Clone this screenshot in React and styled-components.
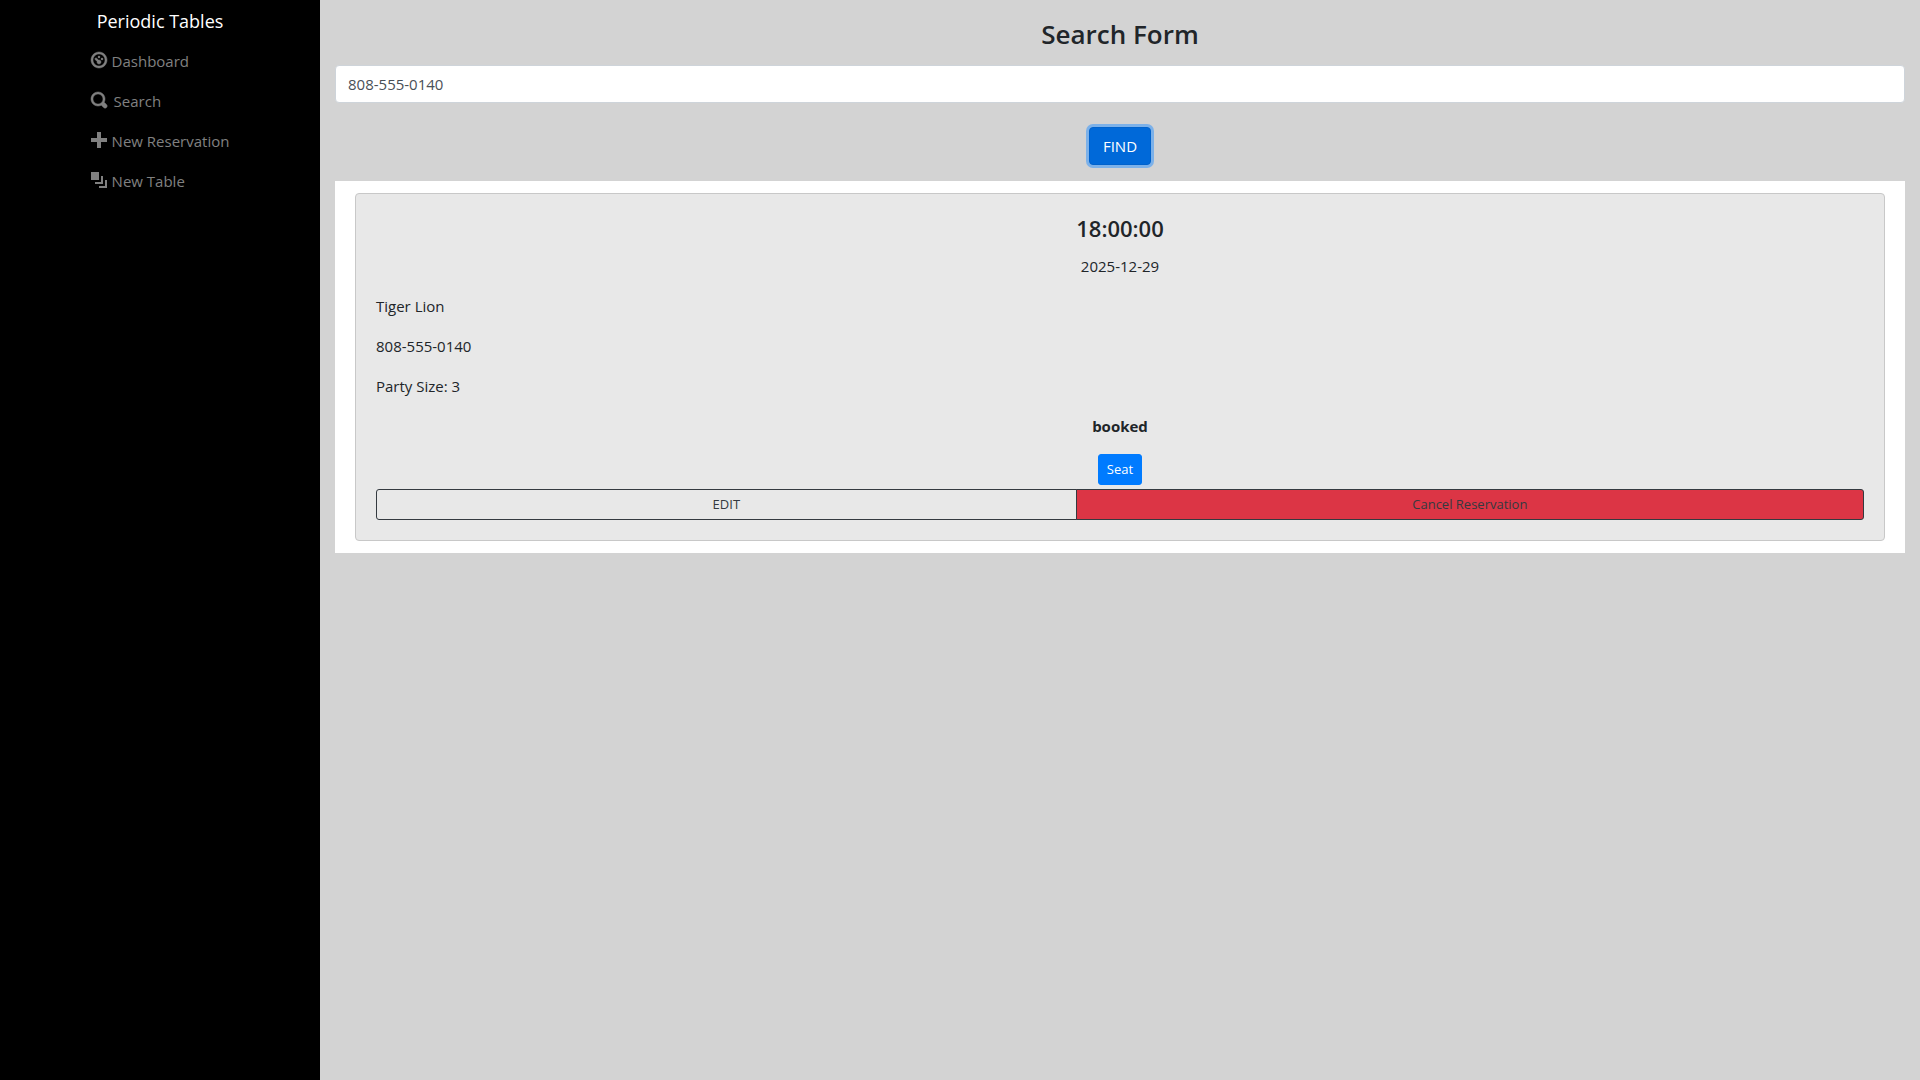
import React, { useState } from "react";
import styled, { createGlobalStyle } from "styled-components";

const GlobalStyle = createGlobalStyle`
  *, *::before, *::after { box-sizing: border-box; }
  body {
    margin: 0;
    background: #d3d3d3;
    color: #212529;
    font-family: "Segoe UI", "Open Sans", "Noto Sans", sans-serif;
    font-size: 15px;
    line-height: 24px;
  }
  h1, h2, p, ul { margin: 0; padding: 0; }
  button, input { font-family: inherit; }
`;

const Layout = styled.div`
  display: grid;
  grid-template-columns: 1fr 5fr;
  min-height: 100vh;
`;

const Sidebar = styled.nav`
  display: flex;
  flex-direction: column;
  align-items: center;
  background: #000;
`;

const Brand = styled.a`
  padding: 6px 0 5px;
  color: #fff;
  font-size: 18px;
  font-weight: 500;
  line-height: 30px;
  text-decoration: none;
`;

const NavList = styled.ul`
  list-style: none;
`;

const NavLink = styled.a`
  display: flex;
  align-items: center;
  gap: ${(p) => (p.$wide ? 7 : 5)}px;
  padding: 8px 0;
  color: #808080;
  text-decoration: none;
`;

const Icon = styled.svg`
  width: 16px;
  height: 16px;
  margin-bottom: 2px;
  overflow: visible;
  fill: currentColor;
  stroke: currentColor;
  stroke-width: ${(p) => (p.$heavy ? 0.25 : 0)};
`;

const Main = styled.main`
  padding: 16px 15px;
`;

const Heading = styled.h1`
  padding-bottom: 13px;
  font-size: 26px;
  font-weight: 600;
  line-height: 36px;
  text-align: center;
`;

const SearchForm = styled.form`
  display: flex;
  flex-direction: column;
  align-items: center;
  gap: 24px;
  padding-bottom: 16px;
`;

const SearchInput = styled.input`
  width: 100%;
  height: 38px;
  padding: 6px 12px;
  border: 1px solid #ced4da;
  border-radius: 4px;
  background: #fff;
  color: #495057;
  font-size: 15px;
  line-height: 24px;
`;

const Button = styled.button`
  padding: 6px 12px;
  border: 1px solid #007bff;
  border-radius: 4px;
  background: #007bff;
  color: #fff;
  font-size: 15px;
  line-height: 24px;
  cursor: pointer;
`;

const FindButton = styled(Button)`
  padding: 6px 13px;
  border-color: #0062cc;
  background: #0069d9;
  box-shadow: 0 0 0 3px rgba(38, 143, 255, 0.5);
`;

const SeatButton = styled(Button)`
  align-self: center;
  padding: 4px 8px;
  border-radius: 3px;
  font-size: 13px;
  line-height: 21px;
`;

const Results = styled.section`
  padding: 12px 20px;
  background: #fff;
`;

const Card = styled.article`
  display: flex;
  flex-direction: column;
  padding: 20px;
  border: 1px solid #c8c8c8;
  border-radius: 4px;
  background: #e8e8e8;
`;

const CardTitle = styled.h2`
  padding-bottom: 12px;
  font-size: 22px;
  font-weight: 600;
  line-height: 28px;
  text-align: center;
`;

const CardText = styled.p`
  padding-bottom: 16px;
  font-weight: ${(p) => (p.$bold ? 700 : 400)};
  text-align: ${(p) => (p.$center ? "center" : "left")};
`;

const ButtonGroup = styled.div`
  display: flex;
  padding-top: 4px;
`;

const GroupButton = styled.button`
  flex: 1 1 auto;
  padding: 4px 8px;
  border: 1px solid #343a40;
  border-radius: 3px 0 0 3px;
  background: ${(p) => (p.$danger ? "#dc3545" : "transparent")};
  color: #343a40;
  font-size: 13px;
  line-height: 21px;
  cursor: pointer;

  & + & {
    margin-left: -1px;
    border-radius: 0 3px 3px 0;
  }
`;

const links = [
  {
    label: "Dashboard",
    heavy: true,
    path: "M4 0c-2.2 0-4 1.8-4 4s1.8 4 4 4 4-1.8 4-4-1.8-4-4-4zm0 1c1.66 0 3 1.34 3 3s-1.34 3-3 3-3-1.34-3-3 1.34-3 3-3zm0 1c-.28 0-.5.22-.5.5s.22.5.5.5.5-.22.5-.5-.22-.5-.5-.5zm-1.66 1a.5.5 0 0 0-.19.84l.91.91c-.02.08-.06.16-.06.25 0 .55.45 1 1 1s1-.45 1-1-.45-1-1-1c-.09 0-.17.04-.25.06l-.91-.91a.5.5 0 0 0-.44-.16.5.5 0 0 0-.06 0zm3.16 0c-.28 0-.5.22-.5.5s.22.5.5.5.5-.22.5-.5-.22-.5-.5-.5z",
  },
  {
    label: "Search",
    wide: true,
    heavy: true,
    path: "M3.5 0c-1.93 0-3.5 1.57-3.5 3.5s1.57 3.5 3.5 3.5c.59 0 1.17-.14 1.66-.41a1 1 0 0 0 .13.13l1 1a1.02 1.02 0 1 0 1.44-1.44l-1-1a1 1 0 0 0-.16-.13c.27-.49.44-1.06.44-1.66 0-1.93-1.55-3.5-3.5-3.5zm0 1c1.39 0 2.5 1.11 2.5 2.5 0 .66-.24 1.27-.66 1.72-.01.01-.02.02-.03.03a1 1 0 0 0-.13.13c-.44.4-1.04.63-1.69.63-1.39 0-2.5-1.11-2.5-2.5s1.11-2.5 2.5-2.5z",
  },
  { label: "New Reservation", path: "M3 0v3h-3v2h3v3h2v-3h3v-2h-3v-3h-2z" },
  {
    label: "New Table",
    path: "M0 0v4h4v-4h-4zm5 2v3h-3v1h4v-4h-1zm2 2v3h-3v1h4v-4h-1z",
  },
];

export default function App() {
  const [phone, setPhone] = useState("808-555-0140");

  return (
    <>
      <GlobalStyle />
      <Layout>
        <Sidebar>
          <Brand href="#">Periodic Tables</Brand>
          <NavList>
            {links.map((link) => (
              <li key={link.label}>
                <NavLink href="#" $wide={link.wide}>
                  <Icon viewBox="0 0 8 8" aria-hidden="true" $heavy={link.heavy}>
                    <path d={link.path} />
                  </Icon>
                  {link.label}
                </NavLink>
              </li>
            ))}
          </NavList>
        </Sidebar>
        <Main>
          <Heading id="search-title">Search Form</Heading>
          <SearchForm onSubmit={(e) => e.preventDefault()}>
            <SearchInput
              type="text"
              aria-labelledby="search-title"
              value={phone}
              onChange={(e) => setPhone(e.target.value)}
            />
            <FindButton type="submit">FIND</FindButton>
          </SearchForm>
          <Results>
            <Card>
              <CardTitle>18:00:00</CardTitle>
              <CardText $center>2025-12-29</CardText>
              <CardText>Tiger Lion</CardText>
              <CardText>808-555-0140</CardText>
              <CardText>Party Size: 3</CardText>
              <CardText $center $bold>
                booked
              </CardText>
              <SeatButton type="button">Seat</SeatButton>
              <ButtonGroup>
                <GroupButton type="button">EDIT</GroupButton>
                <GroupButton type="button" $danger>
                  Cancel Reservation
                </GroupButton>
              </ButtonGroup>
            </Card>
          </Results>
        </Main>
      </Layout>
    </>
  );
}
